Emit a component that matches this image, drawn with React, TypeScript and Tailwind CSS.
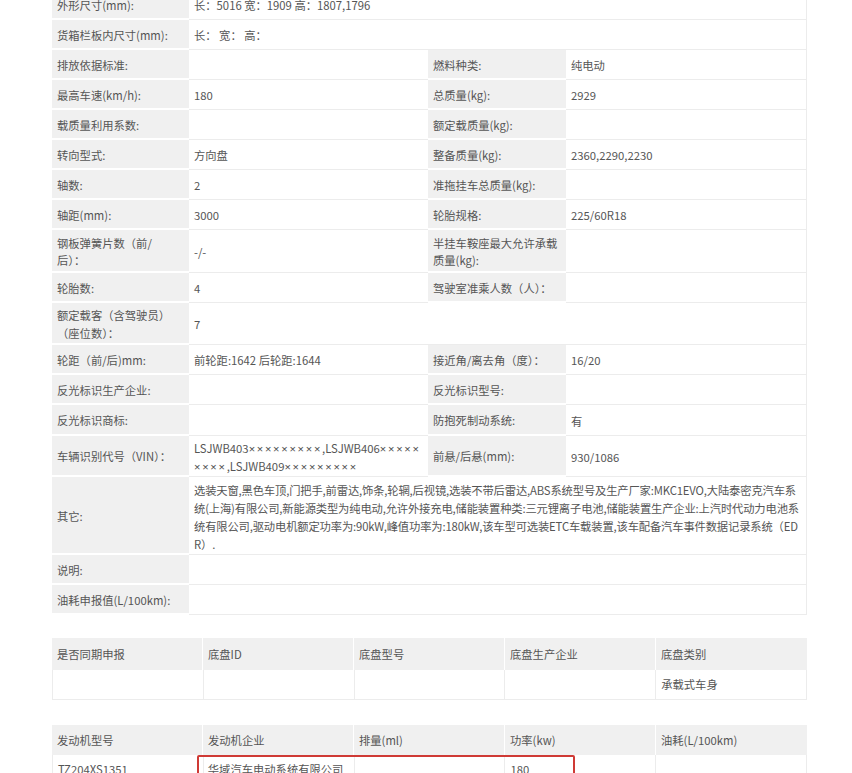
import React from "react";

type Cell = { text?: React.ReactNode; label?: boolean; span?: number };

const W = [137, 239, 138, 241];

function Row({ h, cells }: { h: number; cells: Cell[] }) {
  let col = 0;
  return (
    <div className="flex" style={{ height: h }}>
      {cells.map((c, i) => {
        const span = c.span ?? 1;
        let w = 0;
        for (let k = 0; k < span; k++) w += W[col + k];
        const last = col + span === 4;
        col += span;
        return (
          <div
            key={i}
            style={{ width: w }}
            className={
              "flex items-center pl-[5px] pt-[3px] box-border shrink-0 whitespace-nowrap " +
              (c.label
                ? "bg-[#f0f0f0] border-b-2 border-white"
                : "bg-white border-b border-[#ececec]") +
              (last ? " border-r border-r-[#ececec]" : "")
            }
          >
            <div className="leading-[17.5px]">{c.text}</div>
          </div>
        );
      })}
    </div>
  );
}

const L = (t: React.ReactNode): Cell => ({ text: t, label: true });
const V = (t?: React.ReactNode, span = 1): Cell => ({ text: t, span });

const X = ({ n }: { n: number }) => (
  <span className="tracking-[1.7px]" style={{ fontFamily: '"Noto Sans", "DejaVu Sans", sans-serif' }}>{"×".repeat(n)}</span>
);

export default function App() {
  const font = {
    fontFamily: '"Noto Sans CJK SC", "Noto Sans", sans-serif',
  };
  return (
    <div className="w-[852px] h-[773px] overflow-hidden bg-white text-[11.3px] text-[#555]" style={font}>
      <div className="ml-[52px] w-[755px] -mt-[10px]">
        <Row h={30} cells={[L("外形尺寸(mm):"), V("长：5016 宽：1909 高：1807,1796", 3)]} />
        <Row h={30} cells={[L("货箱栏板内尺寸(mm):"), V("长：  宽：  高：", 3)]} />
        <Row h={30} cells={[L("排放依据标准:"), V(), L("燃料种类:"), V("纯电动")]} />
        <Row h={30} cells={[L("最高车速(km/h):"), V("180"), L("总质量(kg):"), V("2929")]} />
        <Row h={30} cells={[L("载质量利用系数:"), V(), L("额定载质量(kg):"), V()]} />
        <Row h={30} cells={[L("转向型式:"), V("方向盘"), L("整备质量(kg):"), V("2360,2290,2230")]} />
        <Row h={30} cells={[L("轴数:"), V("2"), L("准拖挂车总质量(kg):"), V()]} />
        <Row h={30} cells={[L("轴距(mm):"), V("3000"), L("轮胎规格:"), V("225/60R18")]} />
        <Row
          h={43}
          cells={[
            L(<>钢板弹簧片数（前/<br />后）：</>),
            V("-/-"),
            L(<>半挂车鞍座最大允许承载<br />质量(kg):</>),
            V(),
          ]}
        />
        <Row h={30} cells={[L("轮胎数:"), V("4"), L("驾驶室准乘人数（人）："), V()]} />
        <Row h={42} cells={[L(<>额定载客（含驾驶员）<br />（座位数）：</>), V("7", 3)]} />
        <Row h={30} cells={[L("轮距（前/后)mm:"), V("前轮距:1642 后轮距:1644"), L("接近角/离去角（度）："), V("16/20")]} />
        <Row h={30} cells={[L("反光标识生产企业:"), V(), L("反光标识型号:"), V()]} />
        <Row h={31} cells={[L("反光标识商标:"), V(), L("防抱死制动系统:"), V("有")]} />
        <Row
          h={41}
          cells={[
            L("车辆识别代号（VIN）："),
            V(<>LSJWB403<X n={9} />,LSJWB406<X n={5} /><br /><X n={4} />,LSJWB409<X n={9} /></>),
            L("前悬/后悬(mm):"),
            V("930/1086"),
          ]}
        />
        <Row
          h={78}
          cells={[
            L("其它:"),
            V(
              <div className="whitespace-nowrap leading-[18px] tracking-[-0.15px]">
                选装天窗,黑色车顶,门把手,前雷达,饰条,轮辋,后视镜,选装不带后雷达,ABS系统型号及生产厂家:MKC1EVO,大陆泰密克汽车系<br />
                统(上海)有限公司,新能源类型为纯电动,允许外接充电,储能装置种类:三元锂离子电池,储能装置生产企业:上汽时代动力电池系<br />
                统有限公司,驱动电机额定功率为:90kW,峰值功率为:180kW,该车型可选装ETC车载装置,该车配备汽车事件数据记录系统（ED<br />
                R）.
              </div>,
              3
            ),
          ]}
        />
        <Row h={30} cells={[L("说明:"), V(undefined, 3)]} />
        <Row h={30} cells={[L("油耗申报值(L/100km):"), V(undefined, 3)]} />
      </div>

      <div className="ml-[52px] w-[755px] mt-[23px]">
        <div className="grid grid-cols-5 h-[32px] bg-[#f0f0f0]">
          {["是否同期申报", "底盘ID", "底盘型号", "底盘生产企业", "底盘类别"].map((t) => (
            <div key={t} className="flex items-center pl-[5px] border-r border-white last:border-r-0">{t}</div>
          ))}
        </div>
        <div className="grid grid-cols-5 h-[30px] border-b border-[#ececec] border-l border-l-[#ececec]">
          {["", "", "", "", "承载式车身"].map((t, i) => (
            <div key={i} className="flex items-center pl-[5px] border-r border-[#ececec]">{t}</div>
          ))}
        </div>
      </div>

      <div className="relative ml-[52px] w-[755px] mt-[25px]">
        <div className="grid grid-cols-5 h-[30px] bg-[#f0f0f0]">
          {["发动机型号", "发动机企业", "排量(ml)", "功率(kw)", "油耗(L/100km)"].map((t) => (
            <div key={t} className="flex items-center pl-[5px] border-r border-white last:border-r-0">{t}</div>
          ))}
        </div>
        <div className="grid grid-cols-5 h-[30px] border-b border-[#ececec] border-l border-l-[#ececec]">
          {["TZ204XS1351", "华域汽车电动系统有限公司", "", "180", ""].map((t, i) => (
            <div key={i} className={"flex items-center whitespace-nowrap border-r border-[#ececec] " + (i === 1 ? "pl-[4px]" : "pl-[5px]")}>{t}</div>
          ))}
        </div>
        <div className="absolute left-[145px] top-[30px] w-[378px] h-[40px] border-2 border-[#cf3a35] rounded-[2px]" />
      </div>
    </div>
  );
}
